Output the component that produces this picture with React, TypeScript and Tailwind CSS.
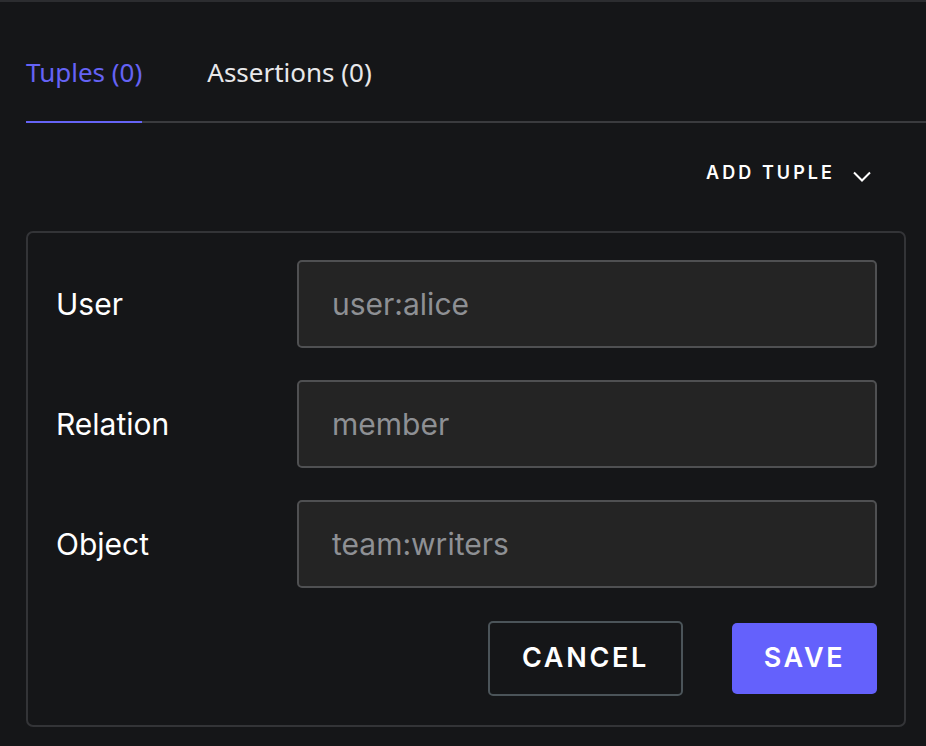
const fields = [
  { label: "User", placeholder: "user:alice" },
  { label: "Relation", placeholder: "member" },
  { label: "Object", placeholder: "team:writers" },
];

export default function App() {
  return (
    <div className="w-[926px] h-[746px] overflow-hidden bg-[#151618] border-t-2 border-[#2c2d30] font-['Inter',sans-serif] text-white">
      <div className="pl-[26px]">
        <div className="flex items-start border-b-2 border-[#3a3b3e] h-[121px] font-['Noto_Sans',sans-serif]">
          <div className="relative h-full pt-[54px] text-[26px] leading-[32px] text-[#6563f5]">
            Tuples (0)
            <span className="absolute left-0 right-0 -bottom-[2px] h-[2px] bg-[#6563f5]" />
          </div>
          <div className="ml-[65px] pt-[54px] text-[26px] leading-[32px] text-[#e8e8ea]">
            Assertions (0)
          </div>
        </div>

        <div className="flex justify-end pr-[55px] pt-[38px] pb-[46px]">
          <button className="flex items-center gap-[18px] text-[18px] font-semibold tracking-[0.17em] text-white leading-[24px]">
            ADD TUPLE
            <svg width="18" height="11" viewBox="0 0 18 11" fill="none" className="mt-[6px]">
              <path d="M1 1.5L9 9.5L17 1.5" stroke="white" strokeWidth="2" />
            </svg>
          </button>
        </div>

        <div className="w-[880px] border-2 border-[#333437] rounded-[7px] pt-[27px] pr-[27px] pb-[29px] pl-[29px]">
          <div className="flex flex-col gap-[32px]">
            {fields.map((f) => (
              <div key={f.label} className="flex items-center">
                <label className="w-[240px] -ml-px text-[30px] leading-none text-white">{f.label}</label>
                <input
                  placeholder={f.placeholder}
                  className="w-[580px] h-[88px] ml-px bg-[#242424] border-2 border-[#4f5052] rounded-[5px] pl-[33px] text-[30px] text-white placeholder:text-[#8e9094] outline-none"
                />
              </div>
            ))}
          </div>
          <div className="flex justify-end items-center gap-[49px] mt-[33px]">
            <button className="w-[195px] h-[75px] border-2 border-[#4b5459] rounded-[5px] text-[27px] font-semibold tracking-[0.1em] text-white">
              CANCEL
            </button>
            <button className="w-[145px] h-[71px] bg-[#6461fc] rounded-[5px] text-[27px] font-semibold tracking-[0.1em] text-white">
              SAVE
            </button>
          </div>
        </div>
      </div>
    </div>
  );
}
